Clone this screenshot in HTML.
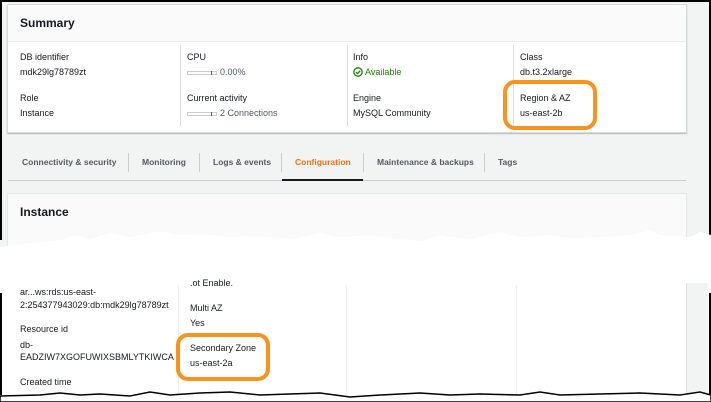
<!DOCTYPE html>
<html><head><style>
*{margin:0;padding:0;box-sizing:border-box}
body{width:711px;height:402px;background:#fff;position:relative;overflow:hidden;font-family:"Liberation Sans",sans-serif;font-size:9px;color:#16191f}
.a{position:absolute;white-space:nowrap}
.bar{display:inline-block;width:30px;height:4px;border:1px solid #ccc;vertical-align:middle;margin-right:3px;position:relative}
.bar:after{content:"";position:absolute;right:4px;top:-1px;width:1px;height:4px;background:#d13212}
.tab{position:absolute;top:157px;font-weight:bold;color:#545b64;font-size:8.5px}
.sep{position:absolute;width:1px;background:#ddd}
</style></head><body>
<div class="a" style="left:0;top:0;width:711px;height:255px;background:#f2f3f3"></div>
<div class="a" style="left:0;top:0;width:711px;height:2px;background:#000"></div>
<div class="a" style="left:0;top:0;width:2px;height:240px;background:#000"></div>
<div class="a" style="left:709px;top:0;width:2px;height:240px;background:#000"></div>
<div class="a" style="left:7px;top:4px;width:680px;height:129px;background:#fff;border:1px solid #d5dbdb;box-shadow:0 1px 1px rgba(0,0,0,.25)"></div>
<div class="a" style="left:8px;top:5px;width:678px;height:37px;background:#fafafa;border-bottom:1px solid #eaeded"></div>
<div class="a" style="left:20px;top:16px;font-size:12px;font-weight:bold">Summary</div>
<div class="sep" style="left:180px;top:45px;height:81px"></div>
<div class="sep" style="left:347px;top:45px;height:81px"></div>
<div class="sep" style="left:513px;top:45px;height:81px"></div>
<div class="a" style="left:20px;top:52px">DB identifier</div>
<div class="a" style="left:20px;top:67px">mdk29lg78789zt</div>
<div class="a" style="left:20px;top:93px">Role</div>
<div class="a" style="left:20px;top:108px">Instance</div>
<div class="a" style="left:187px;top:52px">CPU</div>
<div class="a" style="left:187px;top:67px;color:#545b64"><span class="bar"></span>0.00%</div>
<div class="a" style="left:187px;top:93px">Current activity</div>
<div class="a" style="left:187px;top:108px;color:#545b64"><span class="bar"></span>2 Connections</div>
<div class="a" style="left:353px;top:52px">Info</div>
<div class="a" style="left:353px;top:67px;color:#1d8102"><svg width="10" height="10" style="vertical-align:-2px"><circle cx="5" cy="5" r="4.2" fill="none" stroke="#1d8102" stroke-width="1.3"/><path d="M3 5.2l1.5 1.4L7.2 3.8" fill="none" stroke="#1d8102" stroke-width="1.3"/></svg> Available</div>
<div class="a" style="left:353px;top:93px">Engine</div>
<div class="a" style="left:353px;top:108px">MySQL Community</div>
<div class="a" style="left:520px;top:52px">Class</div>
<div class="a" style="left:520px;top:67px">db.t3.2xlarge</div>
<div class="a" style="left:520px;top:93px">Region &amp; AZ</div>
<div class="a" style="left:520px;top:108px">us-east-2b</div>
<div class="tab" style="left:22px">Connectivity &amp; security</div>
<div class="sep" style="left:128px;top:153px;height:19px;background:#ccc"></div>
<div class="tab" style="left:142px">Monitoring</div>
<div class="sep" style="left:199px;top:153px;height:19px;background:#ccc"></div>
<div class="tab" style="left:213px">Logs &amp; events</div>
<div class="sep" style="left:281px;top:153px;height:19px;background:#ccc"></div>
<div class="tab" style="left:295px;color:#ec7211">Configuration</div>
<div class="sep" style="left:363px;top:153px;height:19px;background:#ccc"></div>
<div class="tab" style="left:377px">Maintenance &amp; backups</div>
<div class="sep" style="left:484px;top:153px;height:19px;background:#ccc"></div>
<div class="tab" style="left:498px">Tags</div>
<div class="a" style="left:8px;top:180px;width:678px;height:1px;background:#ccc"></div>
<div class="a" style="left:282px;top:179px;width:81px;height:2px;background:#16191f"></div>
<div class="a" style="left:7px;top:193px;width:680px;height:60px;background:#fafafa;border:1px solid #e5e8e8"></div>
<div class="a" style="left:20px;top:205px;font-size:12px;font-weight:bold">Instance</div>
<svg class="a" style="left:0;top:225px" width="711" height="40"><defs><filter id="f"><feGaussianBlur stdDeviation="1.5"/></filter></defs>
<path d="M0 22 L30 18 L60 15 L75 10 L90 14 L110 8 L130 12 L160 6 L180 10 L200 9 L230 12 L260 11 L290 14 L320 8 L340 12 L370 10 L400 14 L420 16 L440 10 L470 14 L500 7 L520 12 L550 10 L570 13 L600 12 L630 10 L650 5 L660 10 L690 12 L700 7 L711 10 L711 40 L0 40 Z" fill="#999" filter="url(#f)" transform="translate(0,3)"/>
<path d="M0 22 L30 18 L60 15 L75 10 L90 14 L110 8 L130 12 L160 6 L180 10 L200 9 L230 12 L260 11 L290 14 L320 8 L340 12 L370 10 L400 14 L420 16 L440 10 L470 14 L500 7 L520 12 L550 10 L570 13 L600 12 L630 10 L650 5 L660 10 L690 12 L700 7 L711 10 L711 40 L0 40 Z" fill="#fff"/></svg>
<div class="a" style="left:686px;top:283px;width:22px;height:112px;background:#f2f3f3;border-left:1px solid #e0e0e0"></div>
<div class="a" style="left:0;top:293px;width:2px;height:102px;background:#000"></div>
<div class="a" style="left:709px;top:293px;width:2px;height:102px;background:#000"></div>
<div class="sep" style="left:178px;top:285px;height:110px;background:#eee"></div>
<div class="sep" style="left:346px;top:285px;height:110px;background:#eee"></div>
<div class="sep" style="left:516px;top:285px;height:110px;background:#eee"></div>
<div class="a" style="left:20px;top:287px">ar...ws:rds:us-east-</div>
<div class="a" style="left:20px;top:300px">2:254377943029:db:mdk29lg78789zt</div>
<div class="a" style="left:20px;top:324px">Resource id</div>
<div class="a" style="left:20px;top:340px">db-</div>
<div class="a" style="left:20px;top:352px">EADZIW7XGOFUWIXSBMLYTKIWCA</div>
<div class="a" style="left:20px;top:377px">Created time</div>
<div class="a" style="left:190px;top:278px">.ot Enable.</div>
<div class="a" style="left:190px;top:303px">Multi AZ</div>
<div class="a" style="left:190px;top:318px">Yes</div>
<div class="a" style="left:190px;top:343px">Secondary Zone</div>
<div class="a" style="left:190px;top:358px">us-east-2a</div>
<svg class="a" style="left:0;top:387px" width="711" height="15"><path d="M0 9 L40 8 L60 6 L80 8 L100 7 L130 9 L150 5 L170 8 L200 6 L230 5 L260 8 L290 7 L320 6 L350 10 L380 8 L420 6 L450 8 L480 7 L520 8 L540 5 L560 8 L600 7 L640 6 L680 8 L700 5 L711 8 L711 15 L0 15 Z" fill="#fff" stroke="#000" stroke-width="1.5"/></svg>
<div class="a" style="left:503px;top:80px;width:94px;height:50px;border:4px solid #f7931e;border-radius:12px"></div>
<div class="a" style="left:176px;top:333px;width:94px;height:48px;border:4px solid #f7931e;border-radius:12px"></div>
</body></html>
